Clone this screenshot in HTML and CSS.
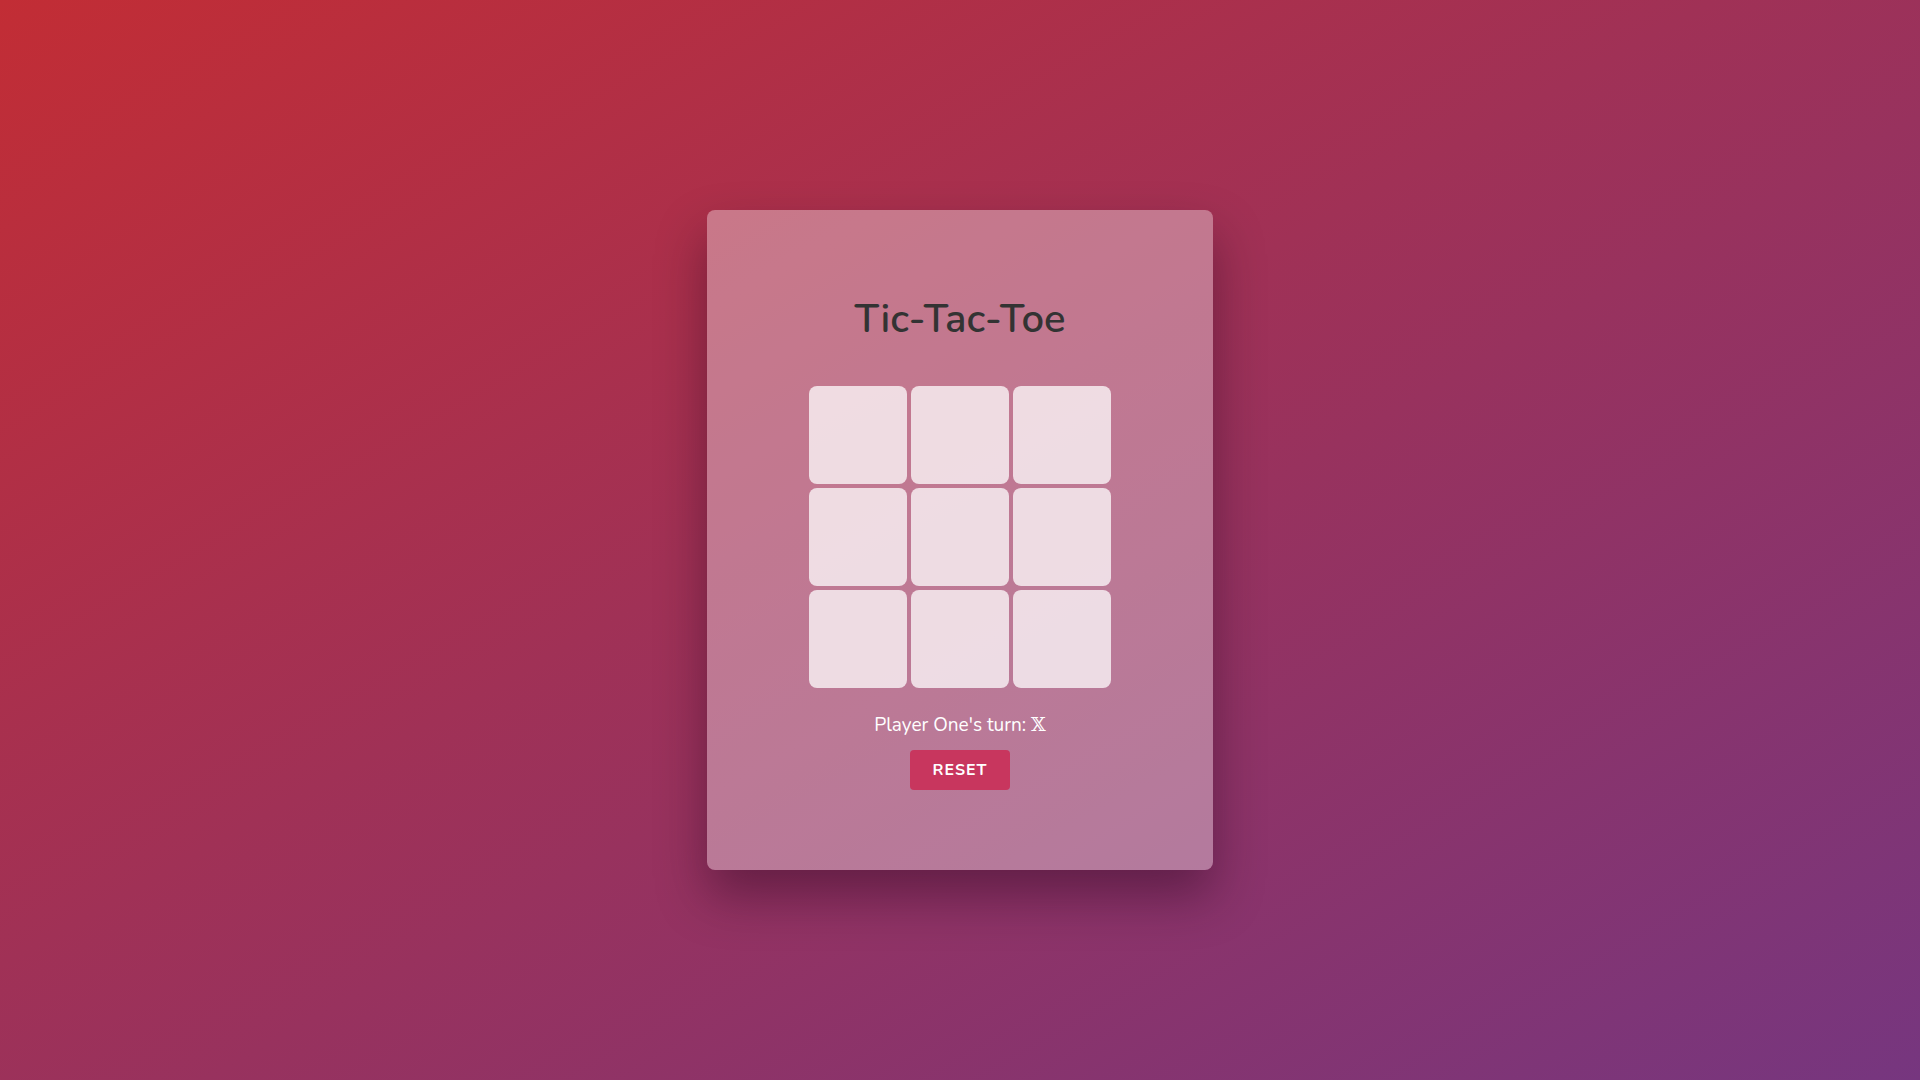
FILE: index.html
```html
<!DOCTYPE html>
<html lang="en">
<head>
<meta charset="utf-8">
<title>Tic-Tac-Toe</title>
<link rel="stylesheet" href="styles.css">
</head>
<body>
  <main class="card">
    <h1 class="title">Tic-Tac-Toe</h1>
    <div class="board">
      <div class="cell"></div>
      <div class="cell"></div>
      <div class="cell"></div>
      <div class="cell"></div>
      <div class="cell"></div>
      <div class="cell"></div>
      <div class="cell"></div>
      <div class="cell"></div>
      <div class="cell"></div>
    </div>
    <p class="status">Player One's turn: <span class="mark">𝕏</span></p>
    <button class="reset">RESET</button>
  </main>
</body>
</html>
```
FILE: styles.css
```css
html, body {
  margin: 0;
  height: 100%;
}
body {
  display: flex;
  align-items: center;
  justify-content: center;
  background: linear-gradient(to bottom right, #c22d35, #76367f);
  font-family: "Nunito", Lato, "Open Sans", sans-serif;
}
.card {
  width: 506px;
  box-sizing: border-box;
  padding: 81px 0 80px;
  display: flex;
  flex-direction: column;
  align-items: center;
  background: rgba(255, 255, 255, 0.35);
  border-radius: 8px;
  box-shadow: 0 26px 50px rgba(30, 0, 25, 0.4);
}
.title {
  margin: 0;
  font-size: 40px;
  line-height: 56px;
  font-weight: 600;
  color: #333;
}
.board {
  margin-top: 39px;
  display: grid;
  grid-template-columns: repeat(3, 98px);
  grid-template-rows: repeat(3, 98px);
  gap: 4px;
}
.cell {
  background: rgba(255, 255, 255, 0.74);
  border-radius: 8px;
}
.status {
  margin: 24px 0 0;
  font-size: 19px;
  line-height: 24px;
  color: #fff;
}
.mark {
  font-family: "DejaVu Serif", serif;
}
.reset {
  margin-top: 13px;
  width: 100px;
  height: 40px;
  border: none;
  border-radius: 4px;
  background: #c8365e;
  color: #fff;
  font-family: inherit;
  font-weight: 700;
  font-size: 16px;
  letter-spacing: 1px;
  padding: 0;
  cursor: pointer;
}
```
